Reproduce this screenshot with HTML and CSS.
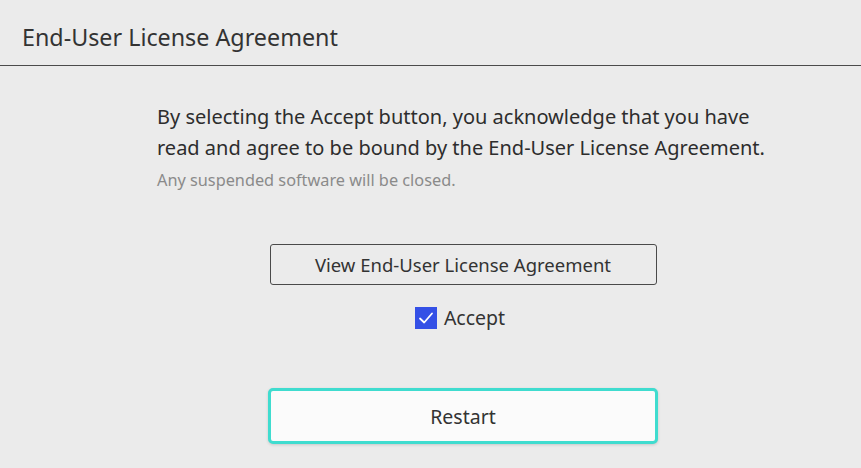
FILE: index.html
```html
<!DOCTYPE html>
<html>
<head>
<meta charset="utf-8">
<link rel="stylesheet" href="styles.css">
</head>
<body>
<div class="page">
  <header class="header">
    <h1 class="title">End-User License Agreement</h1>
  </header>
  <main class="content">
    <div class="message">
      <p class="lead">By selecting the Accept button, you acknowledge that you have read and agree to be bound by the End-User License Agreement.</p>
      <p class="note">Any suspended software will be closed.</p>
    </div>
    <button class="view-btn">View End-User License Agreement</button>
    <label class="accept">
      <span class="checkbox"><svg viewBox="0 0 22 22" width="22" height="22"><path d="M5 11.5 L9.2 15.5 L17 6.5" fill="none" stroke="#fff" stroke-width="1.8" stroke-linecap="round" stroke-linejoin="round"/></svg></span>
      <span class="accept-label">Accept</span>
    </label>
    <button class="restart-btn">Restart</button>
  </main>
</div>
</body>
</html>
```
FILE: styles.css
```css
html, body {
  margin: 0;
  padding: 0;
  background: #ebebeb;
}
body {
  font-family: "Noto Sans", "Open Sans", sans-serif;
  color: #2d2d2d;
  width: 861px;
  height: 468px;
  overflow: hidden;
}
.header {
  height: 66px;
  border-bottom: 1px solid #4b4b4b;
  display: flex;
  align-items: center;
  box-sizing: border-box;
  padding-left: 22px;
  padding-top: 8px;
}
.title {
  margin: 0;
  font-size: 23.3px;
  font-weight: 400;
  color: #333;
}
.content {
  display: flex;
  flex-direction: column;
  align-items: center;
  padding-left: 65px;
}
.message {
  align-self: flex-start;
  margin-left: 92px;
  width: 620px;
  padding-top: 35px;
}
.lead {
  margin: 0;
  font-size: 20px;
  line-height: 31px;
  color: #2d2d2d;
}
.note {
  margin: 7px 0 0;
  font-size: 16.3px;
  line-height: 20px;
  color: #8a8a8a;
}
.view-btn {
  margin-top: 54px;
  width: 387px;
  height: 41px;
  border: 1.5px solid #4a4a4a;
  border-radius: 3px;
  background: transparent;
  font-family: inherit;
  font-size: 18.5px;
  color: #333;
  padding: 0;
}
.accept {
  margin-top: 22px;
  margin-right: 6px;
  display: flex;
  align-items: center;
  gap: 7px;
  height: 22px;
}
.checkbox {
  width: 22px;
  height: 22px;
  background: #3450e6;
  display: block;
}
.checkbox svg { display: block; }
.accept-label {
  font-size: 19.5px;
  line-height: 22px;
  color: #333;
}
.restart-btn {
  margin-top: 59px;
  width: 390px;
  height: 56px;
  border: 3.5px solid #3fdccf;
  border-radius: 5px;
  background: #fbfbfb;
  box-shadow: 0 1px 3px rgba(0,0,0,0.15);
  font-family: inherit;
  font-size: 19.5px;
  color: #333;
  padding: 0;
}
```
